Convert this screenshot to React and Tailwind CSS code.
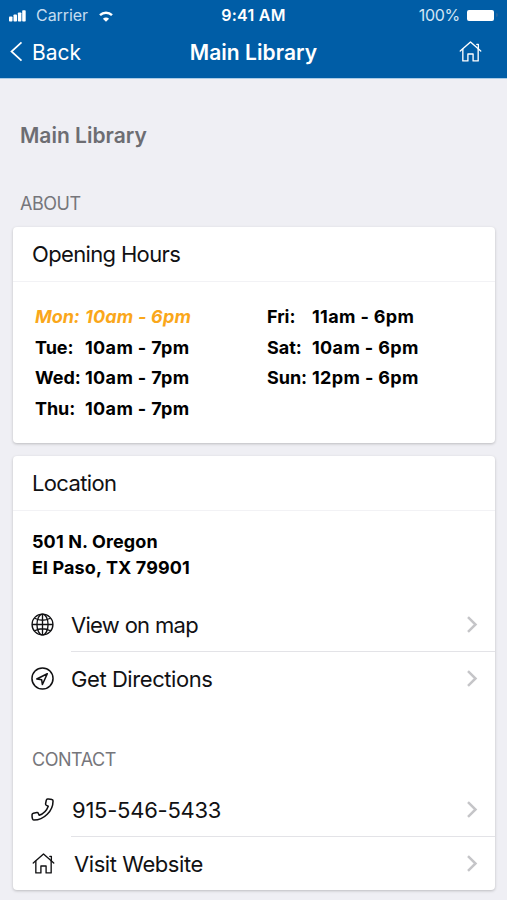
import React from 'react';

const weekStart = [
    { day: 'Mon:', time: '10am - 6pm', today: true },
    { day: 'Tue:', time: '10am - 7pm' },
    { day: 'Wed:', time: '10am - 7pm' },
    { day: 'Thu:', time: '10am - 7pm' },
];

const weekEnd = [
    { day: 'Fri:', time: '11am - 6pm' },
    { day: 'Sat:', time: '10am - 6pm' },
    { day: 'Sun:', time: '12pm - 6pm' },
];

const HomeIcon = ({ className }) => (
    <svg viewBox="0 0 24 24" className={className} fill="none" stroke="currentColor" strokeWidth="1.4" strokeLinejoin="round" strokeLinecap="round">
        <path d="M1.3 11.6 12 2.1l10.7 9.5" />
        <path d="M18.600 4.600h1.600v4.400" />
        <path d="M4 9.6v12.2h5.3v-7.2h5.4v7.2H20V9.6" />
    </svg>
);

const GlobeIcon = ({ className }) => (
    <svg viewBox="0 0 24 24" className={className} fill="none" stroke="currentColor" strokeWidth="1.4">
        <circle cx="12" cy="12" r="10.9" />
        <ellipse cx="12" cy="12" rx="5.8" ry="10.9" />
        <path d="M12 1.100v21.800M1.100 12h21.800M3.800 5.500c4.800 2.400 11.600 2.400 16.400 0M3.800 18.500c4.800-2.400 11.600-2.400 16.400 0" />
    </svg>
);

const NavigateIcon = ({ className }) => (
    <svg viewBox="0 0 24 24" className={className} fill="none" stroke="currentColor" strokeWidth="1.6" strokeLinejoin="round">
        <circle cx="12" cy="12" r="11" />
        <path d="M17 7 6 12.500l5.100.7.8 5.100z" />
    </svg>
);

const PhoneIcon = ({ className }) => (
    <svg viewBox="0 0 24 24" className={className} fill="none" stroke="currentColor" strokeWidth="1.6" strokeLinejoin="round">
        <path d="M17.300 1.100c-.8.1-1.200.6-1.400 1.400l-.7 3.700c-.1.800.2 1.200.9 1.500l1.900.8c-1.500 4.200-5.300 8-9.500 9.500l-.8-1.900c-.3-.7-.7-1-1.500-.9l-3.700.7c-.8.200-1.300.600-1.400 1.400-.1 1.500 0 3 .5 4.500.2.700.6 1.100 1.400 1.200C13.500 23 23 13.500 23 3c0-.8-.5-1.200-1.200-1.400-1.500-.5-3-.6-4.500-.5z" />
    </svg>
);

const Chevron = () => (
    <svg viewBox="0 0 12 18" className="w-[12px] h-[18px] mr-[17px] shrink-0" fill="none" stroke="#c5c5c8" strokeWidth="2.5">
        <path d="M2 1.200 9.500 8.500 2 15.800" />
    </svg>
);

const Hours = ({ items, dayClass }) => (
    <div className="w-[232px] shrink-0 text-[18px] leading-[30.500px] font-bold">
        {items.map(item => (
            <div key={item.day} className={`flex ${item.today ? 'italic text-[#faa71a]' : 'text-black'}`}>
                <span className={`tracking-[-0.050px] ${dayClass}`}>{item.day}</span>
                <span className={item.today ? 'tracking-[0.200px]' : 'tracking-[0.350px]'}>{item.time}</span>
            </div>
        ))}
    </div>
);

const Row = ({ icon: Icon, label, border, iconClass, labelClass }) => (
    <div className="flex h-[54px] items-center pl-[18px]">
        <Icon className={`w-[23px] h-[23px] -mt-[2px] shrink-0 ${iconClass || ''}`} />
        <div className={`ml-[17px] flex h-full flex-1 items-center justify-between border-b ${border ? 'border-[#e3e3e7]' : 'border-transparent'}`}>
            <span className={`pt-[2px] text-[22px] ${labelClass}`}>{label}</span>
            <Chevron />
        </div>
    </div>
);

const Card = ({ title, className, children }) => (
    <section className={`mx-[13px] w-[482px] rounded-[4px] bg-white shadow-[0_1px_3px_rgba(0,0,0,0.22)] ${className}`}>
        <h3 className="flex h-[55px] items-center border-b border-[#f2f2f5] px-[19px] pt-[1px] text-[22px] tracking-[-0.650px]">{title}</h3>
        {children}
    </section>
);

const Header = () => (
    <header className="h-[79px] border-b border-[#a9cbe6] bg-[#005da6] text-white">
        {/* Status bar */}
        <div className="grid h-[30px] grid-cols-[1fr_auto_1fr] items-center pl-[9px] pr-[9px] text-[16px]">
            <div className="flex items-center">
                <svg viewBox="0 0 17 12" className="mt-[2px] w-[17px] h-[12px]" fill="currentColor">
                    <rect x="0" y="6.500" width="3.500" height="5" rx="0.800" />
                    <rect x="4.500" y="4.500" width="3.500" height="7" rx="0.800" />
                    <rect x="8.900" y="2.500" width="3.500" height="9" rx="0.800" />
                    <rect x="13.200" y="0.300" width="3.500" height="11.200" rx="0.800" />
                </svg>
                <span className="ml-[10px] tracking-[-0.050px] text-[#c4dcf0]">Carrier</span>
                <svg viewBox="0 0 14 11" className="ml-[11px] mt-[2px] w-[14px] h-[11px]" fill="none" stroke="currentColor" strokeWidth="2.500">
                    <path d="M1 4.200c3.400-3.200 8.600-3.200 12 0" />
                    <path d="M7 10.800 3.900 7.700c1.700-1.700 4.500-1.700 6.200 0z" fill="currentColor" stroke="none" />
                </svg>
            </div>
            <span className="text-center font-semibold tracking-[0.250px]">9:41 AM</span>
            <div className="flex items-center justify-end">
                <span className="text-[#d3e5f4] tracking-[-0.300px]">100%</span>
                <span className="ml-[7px] h-[11px] w-[27px] rounded-[2px] bg-white" />
                <span className="ml-[2px] h-[4px] w-[2px] rounded-r bg-[#24659f]" />
            </div>
        </div>
        {/* Navigation bar */}
        <div className="grid h-[45px] grid-cols-[1fr_auto_1fr] items-center px-[10px]">
            <div className="flex items-center">
                <svg viewBox="0 0 13 21" className="w-[13px] h-[21px] -mt-[2px]" fill="none" stroke="currentColor" strokeWidth="1.700">
                    <path d="M11.500 1.300 1.500 10.500l10 9.200" />
                </svg>
                <span className="ml-[9px] text-[21px]">Back</span>
            </div>
            <h1 className="whitespace-nowrap text-center text-[21px] font-semibold tracking-[0.060px]">Main Library</h1>
            <HomeIcon className="mr-[15px] -mt-[2px] w-[23px] h-[23px] justify-self-end" />
        </div>
    </header>
);

const App = () => {
    return (
        <div className="h-[900px] w-[507px] overflow-hidden bg-[#efeff4] font-['Inter','Liberation_Sans',sans-serif] text-[#111113]">
            <Header />
            <h2 className="mt-[41px] pl-[20px] text-[21px] leading-[32px] font-semibold text-[#6d6d72]">Main Library</h2>
            <p className="mt-[40px] pl-[20px] text-[18px] leading-[24px] tracking-[-0.450px] text-[#76767b]">ABOUT</p>

            <Card title="Opening Hours" className="mt-[11px] h-[216px]">
                <div className="flex overflow-hidden pl-[22px] pt-[20px]">
                    <Hours items={weekStart} dayClass="w-[50px]" />
                    <Hours items={weekEnd} dayClass="w-[45px]" />
                </div>
            </Card>

            <Card title="Location" className="mt-[13px] h-[434px]">
                <p className="pl-[19px] pt-[18px] text-[18px] leading-[25.500px] font-bold tracking-[0.120px] text-black">
                    501 N. Oregon<br />El Paso, TX 79901
                </p>
                <div className="mt-[18px]">
                    <Row icon={GlobeIcon} label="View on map" labelClass="tracking-[-0.700px]" border />
                    <Row icon={NavigateIcon} label="Get Directions" labelClass="tracking-[-0.430px]" />
                </div>
                <p className="mt-[42px] pl-[19px] text-[18px] leading-[24px] tracking-[-0.450px] text-[#76767b]">CONTACT</p>
                <div className="mt-[11px]">
                    <Row icon={PhoneIcon} label="915-546-5433" labelClass="pl-[1px] tracking-[-0.250px]" border />
                    <Row icon={HomeIcon} label="Visit Website" iconClass="relative left-[1px]" labelClass="pl-[3px] tracking-[-0.430px]" />
                </div>
            </Card>
        </div>
    );
};

export default App;
